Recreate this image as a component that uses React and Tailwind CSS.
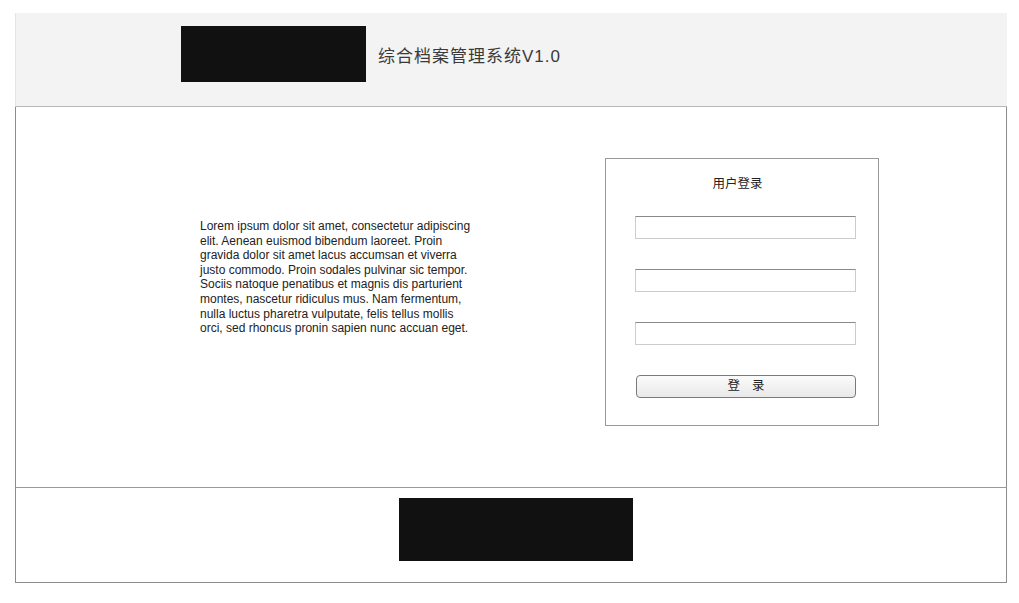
export default function App() {
  return (
    <div className="min-h-screen bg-white pt-[13px] pl-[15px]" style={{ fontFamily: '"Liberation Sans", "Noto Sans CJK SC", sans-serif' }}>
      <div className="w-[992px]">
        {/* header */}
        <header className="h-[94px] bg-[#f3f3f3] border-l border-[#e4e4e4] border-b border-b-[#b8b8b8] flex items-start pl-[165px] pt-[13px]">
          <div className="w-[185px] h-[56px] bg-[#111111]" />
          <h1 className="ml-[12px] mt-[22px] text-[17px] leading-none text-[#3a3a3a] tracking-[1px]">综合档案管理系统V1.0</h1>
        </header>

        {/* main */}
        <main className="h-[380px] border-x border-[#8c8c8c] flex items-start pl-[184px] pt-[51px]">
          <p className="mt-[61px] w-[285px] text-[12px] leading-[14.6px] text-[#222222] whitespace-nowrap">
            Lorem ipsum dolor sit amet, consectetur adipiscing<br />
            elit. Aenean euismod bibendum laoreet. Proin<br />
            gravida dolor sit amet lacus accumsan et viverra<br />
            justo commodo. Proin sodales pulvinar sic tempor.<br />
            Sociis natoque penatibus et magnis dis parturient<br />
            montes, nascetur ridiculus mus. Nam fermentum,<br />
            nulla luctus pharetra vulputate, felis tellus mollis<br />
            orci, sed rhoncus pronin sapien nunc accuan eget.
          </p>
          <div className="ml-[120px] w-[274px] h-[268px] border border-[#999999] flex flex-col pl-[29px]">
            <div className="w-[205px] text-center text-[12.5px] text-[#222222] mt-[19px] leading-none">用户登录</div>
            <input className="mt-[25px] w-[221px] h-[23px] border border-[#cccccc] border-t-[#8a8a8a] bg-white outline-none" />
            <input className="mt-[30px] w-[221px] h-[23px] border border-[#cccccc] border-t-[#8a8a8a] bg-white outline-none" />
            <input className="mt-[30px] w-[221px] h-[23px] border border-[#cccccc] border-t-[#8a8a8a] bg-white outline-none" />
            <button className="mt-[30px] ml-[1px] w-[220px] h-[23px] rounded-[4px] border border-[#7a7a7a] bg-gradient-to-b from-[#fbfbfb] to-[#e9e9e9] text-[12.5px] text-[#222222] tracking-[12px] pl-[12px] leading-none">
              登录
            </button>
          </div>
        </main>

        {/* footer */}
        <footer className="h-[96px] border border-[#8c8c8c] border-t-[#9a9a9a] pl-[383px] pt-[10px]">
          <div className="w-[234px] h-[63px] bg-[#111111]" />
        </footer>
      </div>
    </div>
  );
}
